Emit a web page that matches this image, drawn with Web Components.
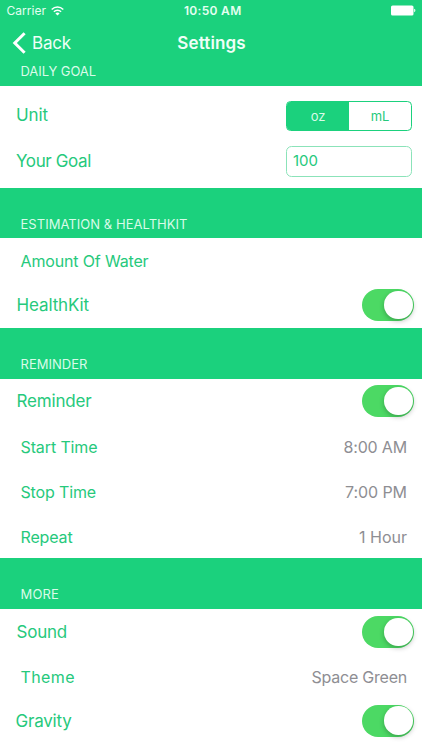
<!DOCTYPE html>
<html lang="en">
<head>
<meta charset="utf-8">
<title>Settings</title>
<style>
html,body{margin:0;padding:0;background:#fff}
body{width:422px;height:750px;overflow:hidden;font-family:Inter,"Liberation Sans",sans-serif;--green:#1bd17d;--ink:#26c97c}
</style>
</head>
<body>
<settings-screen></settings-screen>
<script>
const define = (name, html, setup) => customElements.define(name, class extends HTMLElement {
  connectedCallback() {
    if (this.shadowRoot) return;
    const t = document.createElement('template');
    t.innerHTML = html;
    this.attachShadow({mode: 'open'}).append(t.content.cloneNode(true));
    if (setup) setup(this, this.shadowRoot);
  }
});

/* Single-line label, tracked so that it occupies the width given in "w". */
define('fit-text', `<style>
:host{display:inline-block;white-space:pre;line-height:20px;flex:none}
span{display:inline-block}
</style><span><slot></slot></span>`, (el, root) => {
  const s = root.querySelector('span');
  const w = parseFloat(el.getAttribute('w'));
  const n = el.textContent.length;
  s.style.letterSpacing = (w - s.getBoundingClientRect().width) / n + 'px';
});

define('status-bar', `<style>
:host{display:grid;grid-template-columns:1fr auto 1fr;align-items:center;height:21px;padding:0 6px 0 6.5px;font-size:12px;color:#e4fff1;box-sizing:border-box}
.l{display:flex;align-items:center;gap:5px}
.t{font-weight:600;padding-left:3px}
.r{justify-self:end;display:flex}
svg{display:block}
</style>
<div class="l"><fit-text w="39.5">Carrier</fit-text>
<svg width="13" height="10" viewBox="0 0 13 10" fill="none" stroke="#fff" stroke-width="1.5"><path d="M.7 3.5C4 .2 9 .2 12.3 3.5M2.900 5.700c2-2 5.200-2 7.200 0"/><path d="M6.500 9.500 4.400 7.400c1.200-1.100 3-1.100 4.200 0z" fill="#fff" stroke="none"/></svg></div>
<fit-text class="t" w="57.500">10:50 AM</fit-text>
<div class="r"><svg width="25" height="11" viewBox="0 0 25 11" fill="#fff"><rect x="0" y=".5" width="22.500" height="10" rx="1.600"/><path d="M23.200 3.800c1.600.3 1.600 3.100 0 3.400z"/></svg></div>`);

define('nav-bar', `<style>
:host{display:grid;grid-template-columns:1fr auto 1fr;align-items:center;height:44px;padding:0 12px;color:#effff7;font-size:17px;box-sizing:border-box}
.b{display:flex;align-items:center;gap:6px}
.t{font-weight:600;padding-left:1px}
svg{display:block}
</style>
<div class="b"><svg width="14" height="22" viewBox="0 0 14 22" fill="none" stroke="#fff" stroke-width="3"><path d="M12.600 1.300 2.800 11l9.800 9.700"/></svg><fit-text w="39">Back</fit-text></div>
<fit-text class="t" w="68.500">Settings</fit-text><span></span>`);

define('section-head', `<style>
:host{display:flex;align-items:flex-end;background:var(--green);color:#d9fbe9;font-size:13px;box-sizing:border-box;height:51px;padding:0 0 5px 20.500px}
</style><slot></slot>`);

define('setting-row', `<style>
:host{display:flex;align-items:center;justify-content:space-between;box-sizing:border-box;height:45px;padding:0 8px 0 16px;color:var(--ink);font-size:17px}
:host([switch]){padding:0 8px 1px 16.500px}
:host([inset]){font-size:16px;padding:1px 15px 0 20.500px}
::slotted([slot=value]){color:#8e8e93}
</style><slot></slot><slot name="value"></slot>`);

define('toggle-switch', `<style>
:host{display:flex;justify-content:flex-end;align-items:center;width:52px;height:32px;border-radius:16px;background:#4cd964;box-sizing:border-box;padding-right:1.500px}
i{width:28.500px;height:28.500px;border-radius:50%;background:#fff;box-shadow:0 2px 5px rgba(0,0,0,.25)}
</style><i></i>`);

define('unit-picker', `<style>
:host{display:grid;grid-template-columns:1fr 1fr;width:126px;height:30px;box-sizing:border-box;border:1px solid var(--green);border-radius:4.500px;overflow:hidden;margin-right:2px;font-size:13px}
div{display:flex;align-items:center;justify-content:center}
.on{background:var(--green);color:#d9fbe9}
</style><div class="on"><fit-text w="14.500">oz</fit-text></div><div><fit-text w="18.500">mL</fit-text></div>`);

define('goal-field', `<style>
:host{display:flex;align-items:center;width:126px;height:31px;box-sizing:border-box;border:1px solid #8be3b9;border-radius:5.500px;padding-left:6px;margin-right:2px;font-size:15px}
</style><slot></slot>`);

define('settings-screen', `<style>
:host{display:flex;flex-direction:column;width:422px;height:750px;overflow:hidden}
header{background:var(--green);height:86px;flex:none}
section-head,section{flex:none}
</style>
<header><status-bar></status-bar><nav-bar></nav-bar>
<section-head style="height:21px;padding-bottom:5px"><fit-text w="75.500">DAILY GOAL</fit-text></section-head></header>
<section style="padding:7px 0 4px">
<setting-row><fit-text w="32" style="padding-bottom:2px">Unit</fit-text><unit-picker></unit-picker></setting-row>
<setting-row style="height:46px"><fit-text w="75">Your Goal</fit-text><goal-field><fit-text w="25">100</fit-text></goal-field></setting-row></section>
<section-head style="height:50px;padding-bottom:4px"><fit-text w="167">ESTIMATION &amp; HEALTHKIT</fit-text></section-head>
<section><setting-row inset><fit-text w="128">Amount Of Water</fit-text></setting-row>
<setting-row switch><fit-text w="72.500">HealthKit</fit-text><toggle-switch></toggle-switch></setting-row></section>
<section-head><fit-text w="67">REMINDER</fit-text></section-head>
<section><setting-row switch><fit-text w="75">Reminder</fit-text><toggle-switch></toggle-switch></setting-row>
<setting-row inset><fit-text w="77">Start Time</fit-text><fit-text slot="value" w="63.500">8:00 AM</fit-text></setting-row>
<setting-row inset><fit-text w="75.500">Stop Time</fit-text><fit-text slot="value" w="62">7:00 PM</fit-text></setting-row>
<setting-row inset style="height:44px"><fit-text w="52">Repeat</fit-text><fit-text slot="value" w="48">1 Hour</fit-text></setting-row></section>
<section-head><fit-text w="38.500">MORE</fit-text></section-head>
<section><setting-row style="height:46px;padding-left:16.500px"><fit-text w="50.500">Sound</fit-text><toggle-switch></toggle-switch></setting-row>
<setting-row inset style="height:43px"><fit-text w="54.500">Theme</fit-text><fit-text slot="value" w="95.500">Space Green</fit-text></setting-row>
<setting-row style="padding-left:15.500px"><fit-text w="56">Gravity</fit-text><toggle-switch></toggle-switch></setting-row></section>`);
</script>
</body>
</html>
